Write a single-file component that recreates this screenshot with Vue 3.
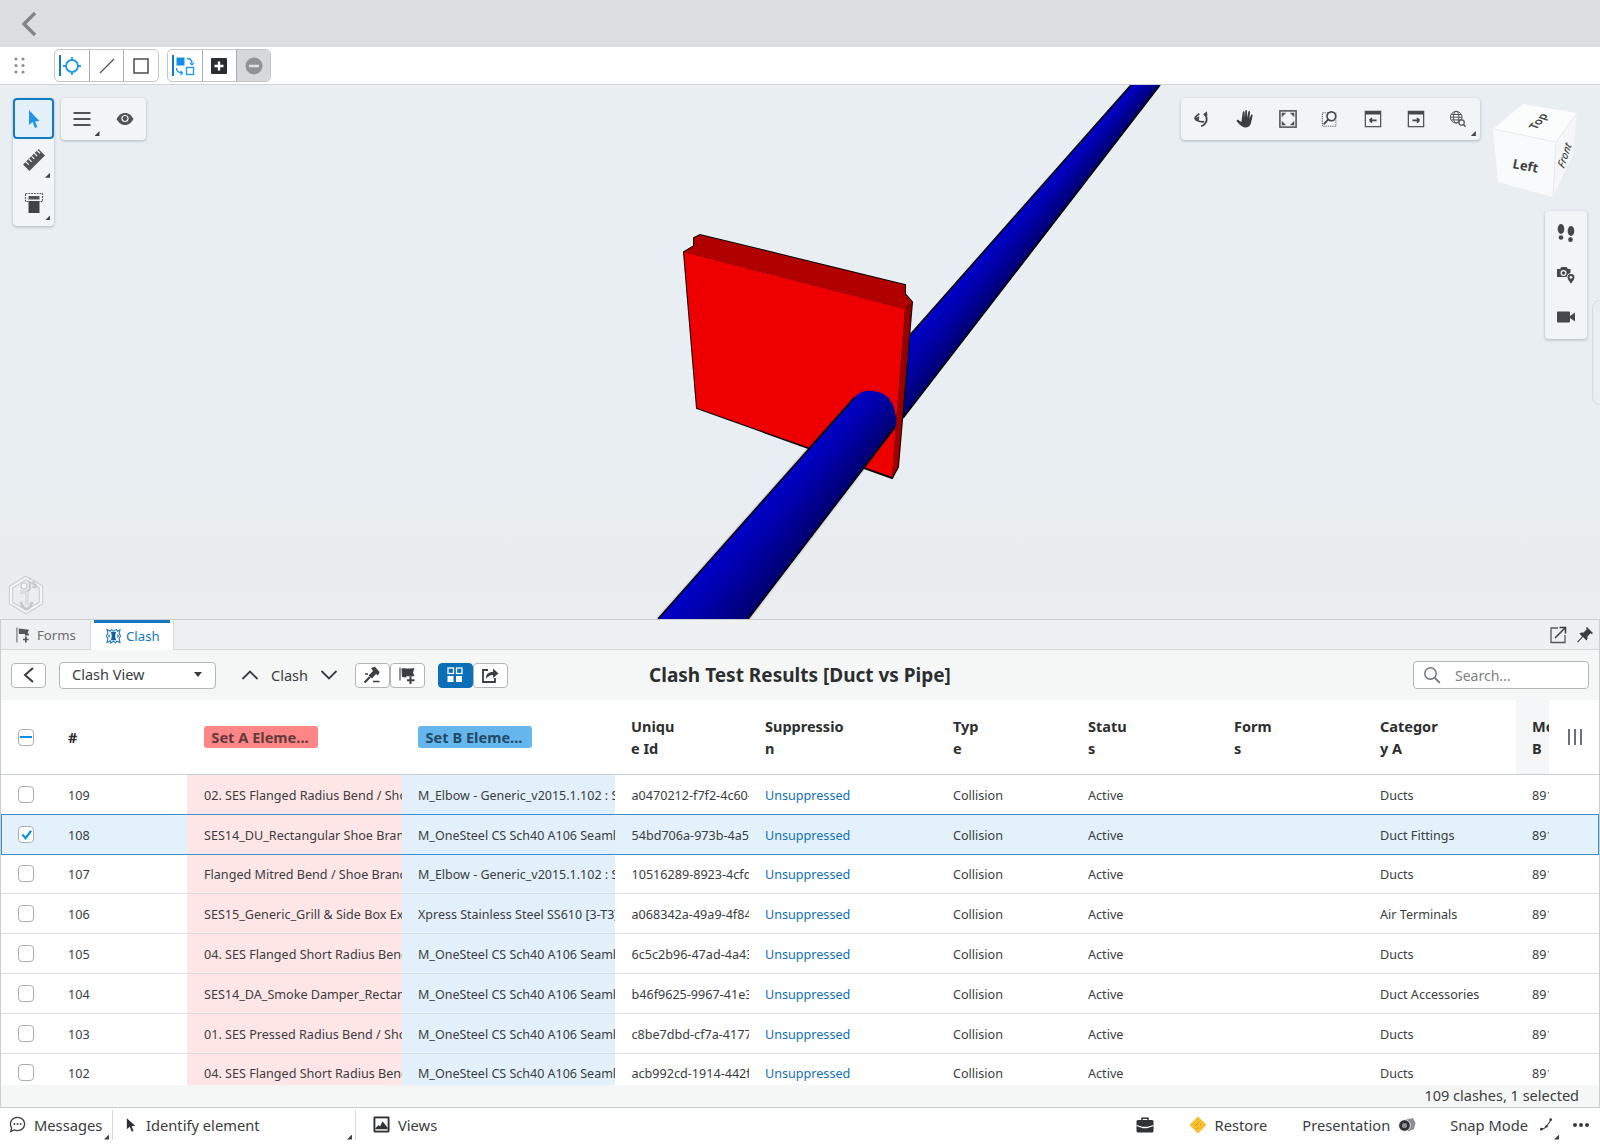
<script setup>
const rows = [
  { n: 109, a: '02. SES Flanged Radius Bend / Shoe Branch', b: 'M_Elbow - Generic_v2015.1.102 : Standard', id: 'a0470212-f7f2-4c60-b1e2', cat: 'Ducts' },
  { n: 108, a: 'SES14_DU_Rectangular Shoe Branch Takeoff', b: 'M_OneSteel CS Sch40 A106 Seamless Pipe', id: '54bd706a-973b-4a52-8c1d', cat: 'Duct Fittings', sel: true },
  { n: 107, a: 'Flanged Mitred Bend / Shoe Branch Outlet', b: 'M_Elbow - Generic_v2015.1.102 : Standard', id: '10516289-8923-4cfd-a7e0', cat: 'Ducts' },
  { n: 106, a: 'SES15_Generic_Grill & Side Box Exhaust', b: 'Xpress Stainless Steel SS610 [3-T3] Pipe', id: 'a068342a-49a9-4f84-9d21', cat: 'Air Terminals' },
  { n: 105, a: '04. SES Flanged Short Radius Bend / Shoe', b: 'M_OneSteel CS Sch40 A106 Seamless Pipe', id: '6c5c2b96-47ad-4a43-b0f6', cat: 'Ducts' },
  { n: 104, a: 'SES14_DA_Smoke Damper_Rectangular Type', b: 'M_OneSteel CS Sch40 A106 Seamless Pipe', id: 'b46f9625-9967-41e3-8a52', cat: 'Duct Accessories' },
  { n: 103, a: '01. SES Pressed Radius Bend / Shoe Branch', b: 'M_OneSteel CS Sch40 A106 Seamless Pipe', id: 'c8be7dbd-cf7a-4177-93ac', cat: 'Ducts' },
  { n: 102, a: '04. SES Flanged Short Radius Bend / Shoe', b: 'M_OneSteel CS Sch40 A106 Seamless Pipe', id: 'acb992cd-1914-442f-b6d3', cat: 'Ducts' }
]

// Shade a pipe between its two (non-parallel) silhouette edges: each band paints
// from its own position through to the far edge, so no seams show between bands.
function strips(a0, a1, b0, b1, n = 40) {
  const lerp = (p, q, t) => [p[0] + (q[0] - p[0]) * t, p[1] + (q[1] - p[1]) * t]
  const out = []
  for (let i = 0; i < n; i++) {
    const t = i / n
    const pts = [lerp(a0, b0, t), lerp(a1, b1, t), b1, b0]
    const blue = t < 0.35 ? 200 - 24 * (t / 0.35) : 176 - 66 * ((t - 0.35) / 0.65)
    out.push({ points: pts.map((p) => p.join(',')).join(' '), fill: `rgb(0,0,${Math.round(blue)})` })
  }
  return out
}
const backPipe = strips([909, 336], [1131, 85], [903, 418], [1160, 85])
const frontPipe = strips([658, 619], [877, 372], [748, 619], [916, 400])
</script>

<template>
  <div class="app">
    <header class="topbar">
      <svg class="back" viewBox="0 0 16 26"><path d="M14 2 3 13l11 11" fill="none" stroke="#7f8487" stroke-width="3.4" /></svg>
    </header>

    <div class="toolbar">
      <svg class="grip" viewBox="0 0 11 17"><g fill="#8a8f93"><circle cx="2" cy="2" r="1.6" /><circle cx="9" cy="2" r="1.6" /><circle cx="2" cy="8.5" r="1.6" /><circle cx="9" cy="8.5" r="1.6" /><circle cx="2" cy="15" r="1.6" /><circle cx="9" cy="15" r="1.6" /></g></svg>
      <div class="tgroup">
        <div class="tcell">
          <i class="activebar"></i>
          <svg viewBox="0 0 20 20"><g fill="none" stroke="#1f9bea" stroke-width="1.8"><circle cx="10" cy="10" r="6" /><path d="M10 1v4M10 15v4M1 10h4M15 10h4" /></g></svg>
        </div>
        <div class="tcell">
          <svg viewBox="0 0 20 20"><path d="M3 17 17 3" stroke="#555" stroke-width="1.3" /></svg>
        </div>
        <div class="tcell">
          <svg viewBox="0 0 20 20"><rect x="3" y="3" width="14" height="14" fill="none" stroke="#555" stroke-width="1.6" /></svg>
        </div>
      </div>
      <div class="tgroup second">
        <div class="tcell">
          <i class="activebar"></i>
          <svg viewBox="0 0 20 20"><rect x="1.500" y="1.500" width="8" height="8" fill="#0f8fe6" /><rect x="11.500" y="11.500" width="7" height="7" fill="#fff" stroke="#1f9bea" stroke-width="1.400" /><path d="M12 2.500c3 0 5 1.500 5 5M1.500 12c0 3 2 5 6 5" fill="none" stroke="#1f9bea" stroke-width="1.400" /><path d="m15 7 2 2 2-2M5.500 15l2 2-2 2" fill="none" stroke="#1f9bea" stroke-width="1.200" /></svg>
        </div>
        <div class="tcell">
          <svg viewBox="0 0 20 20"><rect x="2" y="2" width="16" height="16" rx="1" fill="#2b2c2e" /><path d="M10 5.500v9M5.500 10h9" stroke="#fff" stroke-width="2.400" /></svg>
        </div>
        <div class="tcell off">
          <svg viewBox="0 0 20 20"><circle cx="10" cy="10" r="8.500" fill="#8f9396" /><path d="M5 10h10" stroke="#dfe1e3" stroke-width="2.600" /></svg>
        </div>
      </div>
    </div>

    <main class="viewer">
      <svg class="scene" viewBox="0 85 1600 534" width="1600" height="534">
        <defs>
          <clipPath id="backClip"><path d="M909 336 1131 85H1160L903 418Z" /></clipPath>
          <clipPath id="frontClip"><path d="M658 619 855 397C862 390 872 390 882 394 892 399 897 412 895 427L748 619Z" /></clipPath>
          <linearGradient id="sideFace" x1="0" y1="0" x2="1" y2="0">
            <stop offset="0" stop-color="#a80000" /><stop offset="1" stop-color="#8c0000" />
          </linearGradient>
          <filter id="soft" x="-20%" y="-20%" width="140%" height="140%"><feGaussianBlur stdDeviation="1.500" /></filter>
        </defs>

        <g clip-path="url(#backClip)">
          <polygon v-for="(s, i) in backPipe" :key="i" :points="s.points" :fill="s.fill" />
        </g>
        <path d="M909 336 1131 85M903 418 1160 85" fill="none" stroke="#000" stroke-width="1.600" />

        <path d="M684 252 694 246V238L700 235 905 285V294L912 302 898 467 892 478 697 408Z" fill="#000" stroke="#000" stroke-width="2" />
        <path d="M684 252 694 246V238L700 235 905 285V294L912 302 905 309Z" fill="#b00000" />
        <path d="M684 252 905 309 892 477 697 408Z" fill="#ee0000" />
        <path d="M905 309 912 302 898 467 892 477Z" fill="url(#sideFace)" />

        <path d="M658 619 855 397C862 390 872 390 882 394 892 399 897 412 895 427L748 619Z" fill="#400050" opacity="0.7" filter="url(#soft)" />
        <g clip-path="url(#frontClip)">
          <polygon v-for="(s, i) in frontPipe" :key="i" :points="s.points" :fill="s.fill" />
        </g>
        <path d="M658 619 855 397M895 427 748 619" fill="none" stroke="#000" stroke-width="1.600" />

        <g class="logo">
          <path d="M26 578 41 587V603L26 612 11 603V587Z" fill="none" stroke="#cfd3d6" stroke-width="4.500" stroke-linejoin="round" />
          <path d="M26 578 41 587V603L26 612 11 603V587Z" fill="none" stroke="#f4f6f7" stroke-width="2" stroke-linejoin="round" />
          <circle cx="24" cy="586" r="3" fill="#f4f6f7" stroke="#c4c8cb" stroke-width="1.200" />
          <path d="M20 592H27V605M21 602C22 607 25 609 26.500 609 28 609 31 607 32 602" fill="none" stroke="#c4c8cb" stroke-width="2.800" />
          <path d="M20 592H27V605" fill="none" stroke="#f4f6f7" stroke-width="1" />
          <text x="28" y="588" class="logotext">js</text>
        </g>

        <g class="cube">
          <path d="M1493 129 1523 104 1577 113 1556 142Z" fill="#fbfcfc" />
          <path d="M1493 129 1556 142 1553 197 1498 182Z" fill="#f9fafb" />
          <path d="M1556 142 1577 113 1573 155 1553 197Z" fill="#f4f6f7" />
          <path d="M1493 129 1556 142 1577 113M1556 142 1553 197" fill="none" stroke="#e3e6e8" stroke-width="0.800" />
          <text transform="translate(1512 168) rotate(11)" class="cubeleft">Left</text>
          <text transform="translate(1536 130) rotate(-50) skewX(20)" class="cubetop">Top</text>
          <text transform="translate(1564 169) rotate(-72) skewX(-12)" class="cubefront">Front</text>
        </g>
      </svg>

      <div class="panel vert">
        <div class="pbtn active">
          <svg viewBox="0 0 20 20"><path d="M5 1V16L8.500 13 11 19 13.500 18 11 12.500 15.500 12Z" fill="#2196e8" /></svg>
        </div>
        <div class="pbtn">
          <svg viewBox="0 0 24 24"><g transform="rotate(-45 12 12)"><rect x="1" y="7.500" width="22" height="9" fill="#505357" /><path d="M5 7.500v4M9 7.500v4M13 7.500v4M17 7.500v4M21 7.500v4" stroke="#f2f5f7" stroke-width="1.200" /></g></svg>
          <i class="corner"></i>
        </div>
        <div class="pbtn">
          <svg viewBox="0 0 24 24"><rect x="3.500" y="2.500" width="17" height="8" fill="none" stroke="#505357" stroke-width="1.200" stroke-dasharray="1.800 1" /><rect x="6.500" y="5" width="11" height="3.500" fill="#505357" /><rect x="6.500" y="10" width="11" height="12" fill="#3f4246" /></svg>
          <i class="corner"></i>
        </div>
      </div>

      <div class="panel horiz">
        <div class="pbtn">
          <svg viewBox="0 0 20 20"><path d="M1.500 4h17M1.500 10h17M1.500 16h17" stroke="#505357" stroke-width="2" /></svg>
          <i class="corner"></i>
        </div>
        <div class="pbtn">
          <svg viewBox="0 0 20 20"><path d="M1.500 10C4 5.500 7 4 10 4s6 1.500 8.500 6c-2.500 4.500-5.500 6-8.500 6s-6-1.500-8.500-6Z" fill="#505357" /><circle cx="10" cy="9.500" r="3.600" fill="#f2f5f7" /><circle cx="10" cy="9.500" r="2.400" fill="#505357" /></svg>
        </div>
      </div>

      <div class="panel nav">
        <div class="nbtn">
          <svg viewBox="0 0 20 20"><g fill="none" stroke="#44474b" stroke-width="2"><path d="M7 4 3.500 7C2 8.500 2 10 3.500 11 6 13 9 13.500 12.500 13" /><path d="M13 5c2.500 3 2.800 7 .5 10-1 1.500-2.500 2.500-4.500 3" /></g><path d="M11 5 15.500 1.500 16 7Z" fill="#44474b" /><path d="M2 9.500 7 7 6.500 12Z" fill="#44474b" /></svg>
        </div>
        <div class="nbtn">
          <svg viewBox="0 0 20 20"><path d="M7.500 2.500C7.500 1 9.300 1 9.500 2.500L10 8.500 10.300.8C10.300-.300 12.200-.300 12.200 1L12.500 8.500 13.700 2C14 .8 15.700 1 15.600 2.300L15 9.500 16.700 5.500C17.300 4.500 18.800 5 18.500 6.300L16.500 15C15.500 18.500 12.500 19.800 10 19.500 7 19 4.500 17 .8 12.500 .3 11.500 1.500 10.500 2.500 11L6 13.200Z" fill="#3c3f42" /></svg>
        </div>
        <div class="nbtn">
          <svg viewBox="0 0 20 20"><rect x="1" y="1" width="18" height="18" fill="none" stroke="#505357" stroke-width="1.700" /><path d="M3 3h5L3 8ZM17 3h-5l5 5ZM3 17h5L3 12ZM17 17h-5l5-5Z" fill="#505357" /></svg>
        </div>
        <div class="nbtn">
          <svg viewBox="0 0 20 20"><rect x="1.500" y="3" width="15" height="15" fill="none" stroke="#6a6d70" stroke-width="1.200" stroke-dasharray="1.500 1" /><circle cx="11.500" cy="7" r="4.900" fill="#f2f5f7" stroke="#44474b" stroke-width="1.800" /><path d="M8 10.500 3 16" stroke="#44474b" stroke-width="2" /></svg>
        </div>
        <div class="nbtn">
          <svg viewBox="0 0 20 20"><rect x="1.500" y="1.500" width="17" height="17" fill="none" stroke="#505357" stroke-width="1.400" /><rect x="1.500" y="1.500" width="17" height="3.500" fill="#44474b" /><path d="M6 11.500h8M6 11.500l3-2.500M6 11.500l3 2.500" stroke="#44474b" stroke-width="1.800" fill="none" /></svg>
        </div>
        <div class="nbtn">
          <svg viewBox="0 0 20 20"><rect x="1.500" y="1.500" width="17" height="17" fill="none" stroke="#505357" stroke-width="1.400" /><rect x="1.500" y="1.500" width="17" height="3.500" fill="#44474b" /><path d="M14 11.500H6M14 11.500l-3-2.500M14 11.500l-3 2.500" stroke="#44474b" stroke-width="1.800" fill="none" /></svg>
        </div>
        <div class="nbtn">
          <svg viewBox="0 0 20 20"><g fill="none" stroke="#505357" stroke-width="1.100"><circle cx="8" cy="8" r="6.500" /><ellipse cx="8" cy="8" rx="3" ry="6.500" /><path d="M1.500 8h13M2.500 5h11M2.500 11h11" /></g><circle cx="14" cy="14" r="3" fill="#f2f5f7" stroke="#505357" stroke-width="1.300" /><path d="m16 16 2.500 2.500" stroke="#505357" stroke-width="1.500" /></svg>
          <i class="corner"></i>
        </div>
      </div>

      <div class="panel side">
        <div class="pbtn">
          <svg viewBox="0 0 20 20"><g fill="#44474b"><ellipse cx="5" cy="6" rx="3.300" ry="5" /><ellipse cx="5" cy="14.500" rx="2.300" ry="2.300" /><ellipse cx="15" cy="8" rx="3.300" ry="5" /><ellipse cx="14.500" cy="16.500" rx="2.300" ry="2.500" /></g></svg>
        </div>
        <div class="pbtn">
          <svg viewBox="0 0 20 20"><path d="M1 4h3l1.500-2h5L12 4h2.500v8H1Z" fill="#44474b" /><circle cx="7.500" cy="8" r="3" fill="#f2f5f7" /><circle cx="7.500" cy="8" r="1.700" fill="#44474b" /><path d="M15 8.500c-2.400 0-4 1.700-4 3.800 0 2.200 2.200 4.200 4 7.200 1.800-3 4-5 4-7.200 0-2.100-1.600-3.800-4-3.800Z" fill="#44474b" stroke="#f2f5f7" /><circle cx="15" cy="12.300" r="1.400" fill="#f2f5f7" /></svg>
        </div>
        <div class="pbtn">
          <svg viewBox="0 0 20 20"><rect x="1" y="4.500" width="13" height="11" rx="1" fill="#44474b" /><path d="M14 9 19 5.500V14.500L14 11Z" fill="#44474b" /></svg>
        </div>
      </div>

      <div class="handle"></div>
    </main>

    <section class="dock">
      <nav class="tabs">
        <div class="tab">
          <svg viewBox="0 0 16 16"><path d="M1 0v16" stroke="#6a6d70" stroke-width="1.200" /><path d="M3 1 14 2.500 12.500 5 14 8.500H9.500V7H3Z" fill="#54575a" /><path d="M10.500 9.500v6.500M7.500 12.800h6" stroke="#54575a" stroke-width="1.800" /></svg>
          <span>Forms</span>
        </div>
        <div class="tab current">
          <svg viewBox="0 0 16 16"><path d="M1 1 4.500 3 6 1 8 3 11 1 12.500 3 15 1.500 14 5 15.500 8 14 11 15 15 11.500 13.500 10 15.500 8 13.500 5 15.500 4.500 13 1 15 2 11 .5 8 2 5Z" fill="none" stroke="#1677c0" stroke-width="1.100" /><path d="M5 3.800C6.500 6 6.500 10 5 12.500H11C9.500 10 9.500 6 11 3.800Z" fill="#125f9c" /><path d="M4 6 2 8 4 10ZM12 6 14 8 12 10Z" fill="#1677c0" /></svg>
          <span>Clash</span>
        </div>
        <div class="tabicons">
          <svg viewBox="0 0 18 18"><path d="M9 2H2v14.500h14V9" fill="none" stroke="#55585b" stroke-width="1.300" /><path d="M6 12 16 2M10.500 1.500H16.500V7.500" fill="none" stroke="#3a3c3f" stroke-width="1.500" /></svg>
          <svg viewBox="0 0 18 18"><path d="M11 1 17 7 15.800 8 14.500 7.300 11.300 10.800C11.800 12.300 11.500 13.500 10.500 14.500L7 11 2 16.500 1 16 6 10.500 3.500 7.500C4.500 6.500 5.800 6.200 7.200 6.700L10.700 3.500 10 2Z" fill="#3c3f42" /></svg>
        </div>
      </nav>

      <div class="actions">
        <div class="left">
          <button class="btn backbtn">
            <svg viewBox="0 0 14 18"><path d="M11 2 3 9l8 7" fill="none" stroke="#3a3c3f" stroke-width="2" /></svg>
          </button>
          <button class="select">
            <span>Clash View</span>
            <i class="caret"></i>
          </button>
          <div class="stepper">
            <svg viewBox="0 0 18 12"><path d="M1.500 10 9 2.500 16.500 10" fill="none" stroke="#3a3c3f" stroke-width="1.800" /></svg>
            <span>Clash</span>
            <svg viewBox="0 0 18 12"><path d="M1.500 2 9 9.500 16.500 2" fill="none" stroke="#3a3c3f" stroke-width="1.800" /></svg>
          </div>
          <div class="joined">
            <button class="btn ic">
              <svg viewBox="0 0 18 18"><path d="M8 2 12 .8 16.500 6 15 9.500 13 8 9 12.500 5.500 9.500 10 5Z" fill="#3c3f42" /><path d="M7 11 1.500 16.500" stroke="#3c3f42" stroke-width="2.200" /><path d="M2 8h3M10 15.500h6.500" stroke="#3c3f42" stroke-width="1.400" /></svg>
            </button>
            <button class="btn ic">
              <svg viewBox="0 0 18 18"><path d="M2 1.500v13" stroke="#55585b" stroke-width="1.300" /><path d="M3.500 2.500c3-1 6 1 13-.5L15 6.500 16.500 10c-2.500.5-4.500.5-8 0v1.500L4 11Z" fill="#3c3f42" /><path d="M12.500 10.500v7.500M9 14.300h7.500" stroke="#3c3f42" stroke-width="2" /></svg>
            </button>
          </div>
          <div class="joined second">
            <button class="btn ic on">
              <svg viewBox="0 0 18 18"><g fill="none" stroke="#fff" stroke-width="1.300"><rect x="2" y="2" width="5.500" height="5.500" /><rect x="10.500" y="2" width="5.500" height="5.500" /></g><rect x="1.500" y="10" width="6" height="6" fill="#fff" /><rect x="10" y="10" width="6" height="6" fill="#fff" /></svg>
            </button>
            <button class="btn ic">
              <svg viewBox="0 0 18 18"><path d="M7 4H2v12h12v-4" fill="none" stroke="#3c3f42" stroke-width="1.800" /><path d="M5 13c0-5 2-7 7-7V2.500L17.500 7.500 12 12V9c-3 0-5 1-7 4Z" fill="#3c3f42" /></svg>
            </button>
          </div>
        </div>
        <h1 class="title">Clash Test Results [Duct vs Pipe]</h1>
        <div class="search">
          <svg viewBox="0 0 18 18"><circle cx="7.500" cy="7.500" r="5.700" fill="none" stroke="#6f7376" stroke-width="1.500" /><path d="m11.800 11.800 5 5" stroke="#6f7376" stroke-width="1.800" /></svg>
          <span>Search...</span>
        </div>
      </div>

      <div class="table">
        <div class="grid head">
          <div class="c check"><span class="box minus"></span></div>
          <div class="c num">#</div>
          <div class="c badgecell"><span class="badge red">Set A Eleme...</span></div>
          <div class="c badgecell"><span class="badge blue">Set B Eleme...</span></div>
          <div class="c wrap">Uniqu<br />e Id</div>
          <div class="c wrap">Suppressio<br />n</div>
          <div class="c wrap">Typ<br />e</div>
          <div class="c wrap">Statu<br />s</div>
          <div class="c wrap">Form<br />s</div>
          <div class="c wrap">Categor<br />y A</div>
          <div class="c wrap gray">Mo<br />B</div>
          <div class="c cols">
            <svg viewBox="0 0 16 18"><path d="M2 1v16M8 1v16M14 1v16" stroke="#55585b" stroke-width="1.700" /></svg>
          </div>
        </div>
        <div class="body">
          <div v-for="r in rows" :key="r.n" class="grid row" :class="{ selected: r.sel }">
            <div class="c check"><span class="box" :class="{ ticked: r.sel }"><svg v-if="r.sel" viewBox="0 0 14 14"><path d="M2.500 7 6 11l6-8" fill="none" stroke="#1090ea" stroke-width="2.400" /></svg></span></div>
            <div class="c num">{{ r.n }}</div>
            <div class="c seta">{{ r.a }}</div>
            <div class="c setb">{{ r.b }}</div>
            <div class="c uid">{{ r.id }}</div>
            <div class="c link">Unsuppressed</div>
            <div class="c">Collision</div>
            <div class="c">Active</div>
            <div class="c"></div>
            <div class="c">{{ r.cat }}</div>
            <div class="c">8912</div>
            <div class="c"></div>
          </div>
        </div>
      </div>

      <div class="count">109 clashes, 1 selected</div>
    </section>

    <footer class="status">
      <div class="sitem msg">
        <svg viewBox="0 0 18 18"><path d="M9 1.500c4.400 0 7.500 3 7.500 7s-3.100 7-7.500 7c-1.300 0-2.500-.3-3.500-.8L1.800 16.500 2.800 12.800C2 11.700 1.500 10.200 1.500 8.500c0-4 3.100-7 7.500-7Z" fill="none" stroke="#3a3c3f" stroke-width="1.400" /><g fill="#3a3c3f"><circle cx="5.700" cy="8.500" r="1" /><circle cx="9" cy="8.500" r="1" /><circle cx="12.300" cy="8.500" r="1" /></g></svg>
        <span>Messages</span>
        <i class="corner"></i>
      </div>
      <div class="sitem ident">
        <svg viewBox="0 0 12 18"><path d="M1 1V14L4.500 11 7 17 9 16 6.800 10.500 11 10Z" fill="#2f3134" /></svg>
        <span>Identify element</span>
        <i class="corner"></i>
      </div>
      <div class="sitem views">
        <svg viewBox="0 0 18 18"><rect x="0.500" y="0.500" width="17" height="17" rx="1.500" fill="#2f3134" /><rect x="2.500" y="2.500" width="13" height="13" fill="#fff" /><path d="M2.500 13 6 9.500 7.500 11 10 5.500 15.500 12.500V14H2.500Z" fill="#2f3134" /></svg>
        <span>Views</span>
      </div>
      <div class="sright">
        <svg class="brief" viewBox="0 0 18 16"><path d="M6 3V1.200h6V3" fill="none" stroke="#2f3134" stroke-width="1.500" /><rect x="0.500" y="3" width="17" height="12.500" rx="1.500" fill="#2f3134" /><path d="M0.500 8.500 7 10.500h4l6.500-2" stroke="#fff" stroke-width="1.300" fill="none" /></svg>
        <div class="sitem restore">
          <svg viewBox="0 0 18 18"><path d="M9 .5 17.500 9 9 17.500.5 9Z" fill="#f8bd2e" /><path d="M6 10l4-4M8 12.500l1.500-1.500M11 9l1-1" stroke="#a07a18" stroke-width="1" stroke-dasharray="1 1" /></svg>
          <span>Restore</span>
        </div>
        <div class="sitem pres">
          <span>Presentation</span>
          <svg viewBox="0 0 18 16"><path d="M6 3 15 1 17.500 6 16 12 10 14.500Z" fill="#8d9093" /><circle cx="6.500" cy="8.500" r="5.800" fill="#2f3134" stroke="#fff" stroke-width="0.800" /><circle cx="6.500" cy="8.500" r="2.600" fill="#8d9093" /></svg>
        </div>
        <div class="sitem snap">
          <span>Snap Mode</span>
          <svg viewBox="0 0 14 14"><path d="M1.500 12C6 12 6 9.500 8 7.500c1.500-1.500 3-3 3.500-6" fill="none" stroke="#3a3c3f" stroke-width="1.200" /><g fill="#2f3134"><circle cx="1.500" cy="12" r="1.400" /><circle cx="7" cy="9" r="1.300" /><circle cx="11.500" cy="1.800" r="1.400" /></g></svg>
          <i class="corner"></i>
        </div>
        <svg class="dots" viewBox="0 0 18 6"><g fill="#3a3c3f"><circle cx="3" cy="3" r="2" /><circle cx="9" cy="3" r="2" /><circle cx="15" cy="3" r="2" /></g></svg>
      </div>
    </footer>
  </div>
</template>

<style scoped>
.app {
  width: 1600px;
  height: 1145px;
  display: flex;
  flex-direction: column;
  overflow: hidden;
  font-family: "Noto Sans", sans-serif;
  color: #3a3c3f;
  background: #fff;
}
.topbar {
  height: 47px;
  flex: none;
  background: #dcdfe2;
  display: flex;
  align-items: center;
  padding-left: 21px;
  box-sizing: border-box;
}
.back { width: 16px; height: 26px; }

.toolbar {
  height: 38px;
  flex: none;
  background: #fff;
  border-bottom: 1px solid #cfd3d6;
  box-sizing: border-box;
  display: flex;
  align-items: center;
  padding-left: 14px;
}
.grip { width: 11px; height: 17px; margin-right: 29px; }
.tgroup {
  display: flex;
  height: 33px;
  border: 1px solid #c2c5c8;
  border-radius: 5px;
  box-sizing: border-box;
  overflow: hidden;
}
.tgroup.second { margin-left: 8px; }
.tcell {
  position: relative;
  width: 34.200px;
  height: 100%;
  display: flex;
  align-items: center;
  justify-content: center;
  border-left: 1.500px solid #a9adb0;
  box-sizing: border-box;
}
.tcell:first-child { border-left: none; }
.tcell svg { width: 20px; height: 20px; }
.tcell.off { background: #d6d9dc; }
.activebar {
  position: absolute;
  left: 4px;
  top: 5px;
  bottom: 5px;
  width: 2px;
  background: #0f7cc4;
}

.viewer {
  position: relative;
  height: 534px;
  flex: none;
  background: linear-gradient(#e8eef2 0%, #e8eef2 70%, #ebedef 100%);
}
.scene { display: block; }
.logotext { font: 700 12px "Noto Sans", sans-serif; fill: #c4c8cb; }
.cubeleft { font: 700 13px "Noto Sans", sans-serif; fill: #3c3f42; }
.cubetop { font: 600 11px "Noto Sans", sans-serif; fill: #3c3f42; }
.cubefront { font: italic 500 10.500px "Noto Sans", sans-serif; fill: #3c3f42; }

.panel {
  position: absolute;
  background: #f2f5f7;
  border-radius: 4px;
  box-shadow: 0 1px 3px rgba(60, 70, 80, 0.35);
  display: flex;
}
.pbtn {
  position: relative;
  width: 41px;
  height: 42.700px;
  display: flex;
  align-items: center;
  justify-content: center;
  box-sizing: border-box;
}
.pbtn svg { width: 20px; height: 20px; }
.pbtn.active { background: #e3f0fa; border: 2px solid #0f7cc4; border-radius: 4px; height: 41px; }
.vert { left: 13px; top: 13px; flex-direction: column; width: 41px; padding-bottom: 1.500px; }
.vert .pbtn svg { width: 24px; height: 24px; }
.vert .pbtn:first-child svg { width: 20px; height: 20px; }
.horiz { left: 61px; top: 13px; width: 85px; }
.horiz .pbtn { width: 42.500px; height: 42px; }
.nav { left: 1181px; top: 13px; width: 299px; height: 42px; padding-left: 0; }
.nbtn { position: relative; width: 42.700px; display: flex; align-items: center; justify-content: center; }
.nbtn svg { width: 18px; height: 18px; }
.side { left: 1545px; top: 126px; width: 42px; flex-direction: column; padding: 1px 0; }
.side .pbtn { width: 42px; height: 42px; }
.handle {
  position: absolute;
  right: -8px;
  top: 215px;
  width: 16px;
  height: 105px;
  border: 1px solid #d6dadd;
  border-radius: 8px;
  box-sizing: border-box;
}
.corner {
  position: absolute;
  right: 4px;
  bottom: 4px;
  width: 5px;
  height: 5px;
  background: #3f4246;
  clip-path: polygon(100% 0, 100% 100%, 0 100%);
}

.dock {
  flex: none;
  height: 489px;
  border-top: 1px solid #c8cdd1;
  border-left: 1px solid #c8cdd1;
  border-right: 1px solid #c8cdd1;
  border-bottom: 1px solid #c8cdd1;
  box-sizing: border-box;
  display: flex;
  flex-direction: column;
}
.tabs {
  height: 30px;
  flex: none;
  background: #eef0f1;
  border-bottom: 1px solid #d5d8db;
  box-sizing: border-box;
  display: flex;
  position: relative;
}
.tab {
  width: 90px;
  display: flex;
  align-items: center;
  gap: 6px;
  padding-left: 15px;
  padding-top: 1px;
  box-sizing: border-box;
  font-size: 13.200px;
  color: #6a6d70;
  border-right: 1px solid #d5d8db;
}
.tab svg { width: 15px; height: 16px; }
.tab.current {
  position: relative;
  width: 83px;
  background: #fff;
  color: #1677c0;
  height: 30px;
  gap: 5px;
  padding-left: 15px;
}
.tab.current::before {
  content: "";
  position: absolute;
  left: 3px;
  right: 3px;
  top: 0;
  height: 2.500px;
  background: #1677c0;
}
.tabicons {
  margin-left: auto;
  display: flex;
  gap: 9px;
  align-items: center;
  padding-right: 5px;
}
.tabicons svg { width: 18px; height: 18px; }

.actions {
  height: 50px;
  flex: none;
  background: #f5f7f7;
  position: relative;
  display: flex;
  align-items: center;
}
.left { display: flex; align-items: center; padding-left: 10px; }
.btn {
  height: 25px;
  width: 35px;
  padding: 0;
  background: #fff;
  border: 1px solid #b3b6b9;
  border-radius: 4px;
  display: flex;
  align-items: center;
  justify-content: center;
  box-sizing: border-box;
}
.backbtn svg { width: 14px; height: 18px; }
.ic svg { width: 18px; height: 18px; }
.on { background: #0a6fb8; border-color: #0a6fb8; }
.select {
  width: 157px;
  height: 27px;
  margin-left: 13px;
  padding: 0 13px 2px 12px;
  background: #fff;
  border: 1px solid #b3b6b9;
  border-radius: 4px;
  display: flex;
  align-items: center;
  justify-content: space-between;
  font: 14.500px "Noto Sans", sans-serif;
  color: #3a3c3f;
  box-sizing: border-box;
}
.caret {
  width: 0;
  height: 0;
  border-left: 4px solid transparent;
  border-right: 4px solid transparent;
  border-top: 5px solid #3a3c3f;
}
.stepper {
  display: flex;
  align-items: center;
  margin-left: 25px;
  font-size: 14.500px;
  gap: 12px;
}
.stepper svg { width: 18px; height: 12px; }
.joined { display: flex; margin-left: 17px; }
.joined.second { margin-left: 13px; }
.title {
  position: absolute;
  left: 0;
  right: 0;
  top: 11px;
  margin: 0;
  text-align: center;
  font-size: 19px;
  line-height: 28px;
  font-weight: 700;
  color: #2c2e30;
}
.search {
  position: relative;
  margin-left: auto;
  margin-right: 10px;
  width: 176px;
  height: 28px;
  background: #fff;
  border: 1px solid #b3b6b9;
  border-radius: 4px;
  display: flex;
  align-items: center;
  gap: 14px;
  padding-left: 9px;
  box-sizing: border-box;
  font-size: 14px;
  color: #7b7f82;
}
.search svg { width: 18px; height: 18px; }

.table { flex: none; height: 385px; overflow: hidden; background: #fff; }
.grid {
  display: grid;
  grid-template-columns: 60px 126px 215px 213px 134px 188px 135px 146px 146px 152px 33px 50px;
}
.head { height: 75px; border-bottom: 1px solid #c8cdd1; box-sizing: border-box; }
.c {
  display: flex;
  align-items: center;
  padding-left: 16px;
  overflow: hidden;
  white-space: nowrap;
  min-width: 0;
  font-size: 12.600px;
}
.row .c { padding-top: 2px; box-sizing: border-box; }
.row .check { padding-top: 0; }
.head .c { font-size: 14.500px; font-weight: 700; color: #2c2e30; line-height: 22px; }
.check { padding-left: 17px; }
.num { padding-left: 7px; }
.wrap { display: block; align-self: center; }
.gray { background: #f4f6f7; align-self: stretch; padding-top: 15px; display: block; }
.badgecell { padding-left: 17px; }
.badgecell + .badgecell { padding-left: 16px; }
.badge {
  width: 114px;
  height: 22px;
  border-radius: 3px;
  display: flex;
  align-items: center;
  justify-content: center;
  padding-right: 2px;
  box-sizing: border-box;
  font-size: 14.600px;
  font-weight: 700;
}
.red { background: #ff8587; color: #5f3a3c; }
.blue { background: #66b6ee; color: #234a66; }
.cols { justify-content: flex-start; padding-left: 18px; }
.cols svg { width: 16px; height: 18px; }
.box {
  width: 16px;
  height: 17px;
  border: 1px solid #a9adb0;
  border-radius: 4px;
  background: #fff;
  box-sizing: border-box;
  display: flex;
  align-items: center;
  justify-content: center;
}
.box svg { width: 13px; height: 13px; }
.minus::after { content: ""; width: 12px; height: 2.500px; background: #1090ea; }
.body { height: 310px; overflow: hidden; }
.row {
  position: relative;
  height: 39.800px;
  box-sizing: border-box;
  border-bottom: 1px solid #dcdfe2;
}
.seta { background: #ffe6e6; padding-left: 17px; }
.setb { background: #e2f0fb; padding-left: 16px; font-size: 12.500px; }
.uid { padding-left: 16.500px; }
.link { color: #1170b8; }
.selected { background: #e3f1fb; }
.selected::after {
  content: "";
  position: absolute;
  inset: -1px 0 -1px 0;
  border: 1px solid #3b90cc;
  pointer-events: none;
}
.count {
  flex: 1;
  background: #f5f7f7;
  text-align: right;
  padding-right: 20px;
  font-size: 14.500px;
  line-height: 21px;
}

.status {
  flex: 1;
  display: flex;
  align-items: center;
  font-size: 14.700px;
  position: relative;
  padding-bottom: 4px;
  box-sizing: border-box;
}
.sitem {
  position: relative;
  display: flex;
  align-items: center;
  height: 30px;
  box-sizing: border-box;
}
.sitem svg { flex: none; }
.msg { width: 113px; padding-left: 9px; gap: 8px; border-right: 1px solid #d5d8db; }
.msg svg { width: 17px; height: 17px; }
.ident { width: 243px; padding-left: 13px; gap: 10px; border-right: 1px solid #d5d8db; }
.ident svg { width: 10px; height: 16px; }
.views { padding-left: 17px; gap: 8px; }
.views svg { width: 17px; height: 17px; }
.sright { margin-left: auto; display: flex; align-items: center; padding-right: 10px; }
.brief { width: 18px; height: 16px; margin-right: 35px; }
.restore { gap: 8px; margin-right: 35px; }
.restore svg { width: 18px; height: 18px; }
.pres { gap: 8px; margin-right: 34px; }
.pres svg { width: 18px; height: 16px; }
.snap { gap: 12px; margin-right: 19px; }
.snap svg { width: 13px; height: 13px; }
.snap .corner { right: -6px; bottom: 0; }
.msg .corner, .ident .corner { right: 3px; bottom: 0; }
.dots { width: 18px; height: 6px; }
</style>

<style>
html, body { margin: 0; padding: 0; background: #fff; }
</style>
